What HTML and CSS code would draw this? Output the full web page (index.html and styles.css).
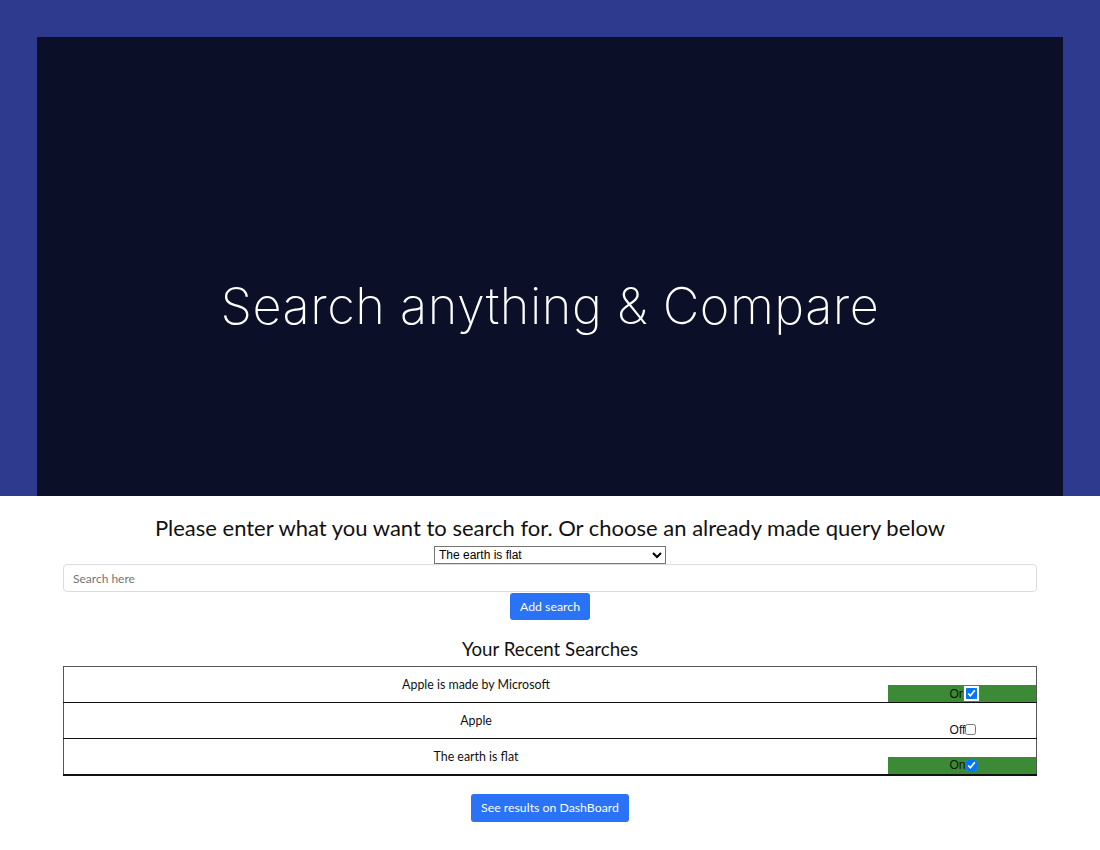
FILE: index.html
```
<!DOCTYPE html>
<html>
<head>
<meta charset="utf-8">
<link rel="stylesheet" href="styles.css">
</head>
<body>
<header class="hero">
  <div class="hero-inner">
    <h1 class="hero-title">Search anything &amp; Compare</h1>
  </div>
</header>
<main class="main">
  <h2 class="prompt">Please enter what you want to search for. Or choose an already made query below</h2>
  <select class="query-select">
    <option>The earth is flat</option>
    <option>Apple</option>
    <option>Apple is made by Microsoft</option>
  </select>
  <input class="search-input" type="text" placeholder="Search here">
  <button class="btn">Add search</button>
  <h3 class="recent">Your Recent Searches</h3>
  <table class="searches">
    <tr>
      <td class="term">Apple is made by Microsoft</td>
      <td class="toggle"><div class="state on">On<input type="checkbox" checked class="focused"></div></td>
    </tr>
    <tr>
      <td class="term">Apple</td>
      <td class="toggle"><div class="state">Off<input type="checkbox"></div></td>
    </tr>
    <tr>
      <td class="term">The earth is flat</td>
      <td class="toggle"><div class="state on">On<input type="checkbox" checked></div></td>
    </tr>
  </table>
  <button class="btn btn-dash">See results on DashBoard</button>
</main>
</body>
</html>
```
FILE: styles.css
```
html, body {
  margin: 0;
  padding: 0;
  background: #fff;
  font-family: "Lato", "Noto Sans", sans-serif;
  color: #111;
}
.hero {
  background: #2e3a8e;
  padding: 37px 37px 0 37px;
}
.hero-inner {
  background: #0b1028;
  height: 459px;
  display: flex;
  justify-content: center;
  align-items: flex-start;
  box-sizing: border-box;
  padding-top: 244px;
}
.hero-title {
  margin: 0;
  color: #fff;
  font-family: "Inter", sans-serif;
  font-weight: 200;
  font-size: 50.5px;
  line-height: 1;
  letter-spacing: 0.5px;
}
.main {
  display: flex;
  flex-direction: column;
  align-items: center;
  padding: 0 63px;
}
.prompt {
  margin: 18px 0 0 0;
  font-size: 22px;
  font-weight: 400;
  line-height: 27px;
}
.query-select {
  margin-top: 5px;
  width: 232px;
  height: 18px;
  font-family: "Liberation Sans", sans-serif;
  font-size: 12px;
  padding: 0;
  border: 1px solid #767676;
  border-radius: 0;
  background: #fff;
}
.search-input {
  width: 100%;
  box-sizing: border-box;
  height: 28px;
  border: 1px solid #d9dce0;
  border-radius: 4px;
  padding: 0 9px;
  font-family: inherit;
  font-size: 12px;
}
.search-input::placeholder {
  color: #757575;
}
.btn {
  margin-top: 1px;
  background: #2a72f6;
  color: #fff;
  border: none;
  border-radius: 3px;
  height: 27px;
  padding: 0 10px;
  font-family: inherit;
  font-size: 12.3px;
}
.recent {
  margin: 18px 0 0 0;
  font-size: 18.7px;
  font-weight: 400;
  line-height: 22px;
}
.searches {
  margin-top: 6px;
  width: 100%;
  border-collapse: collapse;
  border: 1px solid #555;
  border-bottom: 2px solid #111;
  font-size: 12.4px;
}
.searches tr {
  border-bottom: 1px solid #111;
  height: 36px;
}
.term {
  text-align: center;
  vertical-align: top;
  padding: 10px 0 0 0;
  line-height: 15px;
}
.toggle {
  width: 148px;
  vertical-align: bottom;
  padding: 0;
}
.state {
  height: 17px;
  display: flex;
  align-items: center;
  justify-content: center;
  font-family: "Liberation Sans", sans-serif;
  font-size: 12px;
  padding-left: 2px;
  box-sizing: border-box;
}
.state.on {
  background: #3c8a36;
}
.state input {
  margin: 0;
  width: 11px;
  height: 11px;
}
.state input.focused {
  outline: 2px solid #fff;
  outline-offset: 0;
  box-shadow: 0 0 0 3px #3b6ee8;
}
.btn-dash {
  margin-top: 18px;
  height: 28px;
  padding: 0 10px;
}
```
